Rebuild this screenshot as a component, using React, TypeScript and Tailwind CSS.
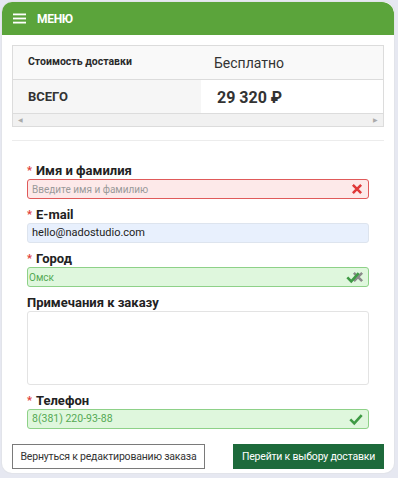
import React from "react";

function Label({ text, required = true }: { text: string; required?: boolean }) {
  return (
    <div className="flex h-[14px] items-center text-[13px] font-bold leading-[14px] text-[#222]">
      {required && <span className="mr-[4px] text-[11px] text-[#e03a3a]">*</span>}
      {text}
    </div>
  );
}

function Check({ className = "" }: { className?: string }) {
  return (
    <svg viewBox="0 0 16 16" className={className} width="14" height="14">
      <path d="M1.5 8.5 L6 13 L14.5 3.5" fill="none" stroke="currentColor" strokeWidth="3" />
    </svg>
  );
}

function Cross({ className = "" }: { className?: string }) {
  return (
    <svg viewBox="0 0 16 16" className={className} width="12" height="12">
      <path d="M2.5 2.5 L13.5 13.5 M13.5 2.5 L2.5 13.5" fill="none" stroke="currentColor" strokeWidth="3.4" />
    </svg>
  );
}

export default function App() {
  return (
    <div className="h-[478px] w-[398px] bg-[#e6e8f1] pl-[2px] pt-[2px] font-['Roboto',sans-serif]">
      <div className="h-[471px] w-[392px] overflow-hidden rounded-[10px] bg-white shadow-[0_0_0_1px_#e2e4ea]">
        <div className="flex h-[33px] items-center rounded-tr-[12px] bg-[#5ba43b] pl-[11px]">
          <svg width="13" height="11" viewBox="0 0 13 11">
            <rect x="0" y="0.5" width="13" height="1.8" fill="#fff" />
            <rect x="0" y="4.6" width="13" height="1.8" fill="#fff" />
            <rect x="0" y="8.7" width="13" height="1.8" fill="#fff" />
          </svg>
          <span className="ml-[11px] text-[12px] font-bold tracking-[-0.3px] text-white">МЕНЮ</span>
        </div>

        <div className="px-[10px] pt-[10px]">
          <div className="border border-[#dcdcdc] border-t-0 border-b-0">
            <div className="h-[1px] bg-[#dcdcdc]" />
            <div className="flex h-[33px] bg-[#f9f9f9]">
              <div className="w-[188px] pl-[15px] pt-[8px] text-[10.5px] font-bold text-[#2a2a2a]">
                Стоимость доставки
              </div>
              <div className="pl-[13px] pt-[7px] text-[14px] text-[#333]">Бесплатно</div>
            </div>
            <div className="h-[1px] bg-[#dcdcdc]" />
            <div className="flex h-[33px]">
              <div className="w-[188px] bg-[#f6f6f6] pl-[15px] pt-[7px] text-[13px] font-bold text-[#333]">
                ВСЕГО
              </div>
              <div className="pl-[16px] pt-[6px] text-[16px] font-bold text-[#333]">29 320 ₽</div>
            </div>
            <div className="flex h-[14px] items-center justify-between border-y border-[#dcdcdc] bg-[#f1f1f1] px-[5px]">
              <span className="text-[6px] leading-none text-[#aaa]">◀</span>
              <span className="text-[6px] leading-none text-[#aaa]">▶</span>
            </div>
          </div>
          <div className="mt-[13px] h-[1px] bg-[#ececec]" />

          <div className="px-[15px] pt-[23px]">
            <Label text="Имя и фамилия" />
            <div className="mt-[1px] flex h-[20px] items-center justify-between rounded-[3px] border border-[#e05a5a] bg-[#fde9e9] pl-[4px] pr-[5px]">
              <span className="text-[10px] text-[#9a9a9a]">Введите имя и фамилию</span>
              <Cross className="text-[#e03a3a]" />
            </div>

            <div className="mt-[9px]">
              <Label text="E-mail" />
            </div>
            <div className="mt-[1px] flex h-[20px] items-center rounded-[3px] border border-[#dde4ee] bg-[#e8f0fd] pl-[4px]">
              <span className="text-[11px] text-[#222]">hello@nadostudio.com</span>
            </div>

            <div className="mt-[9px]">
              <Label text="Город" />
            </div>
            <div className="mt-[1px] flex h-[20px] items-center justify-between rounded-[3px] border border-[#8ed188] bg-[#dff7dd] pl-[1px] pr-[4px]">
              <span className="text-[10px] text-[#55a954]">Омск</span>
              <span className="relative flex h-[14px] w-[18px] items-center justify-end">
                <Cross className="absolute right-0 text-[#8b8b8b]" />
                <Check className="absolute left-0 text-[#3f9a45]" />
              </span>
            </div>

            <div className="mt-[9px]">
              <Label text="Примечания к заказу" required={false} />
            </div>
            <div className="mt-[1px] h-[74px] rounded-[3px] border border-[#e3e3e3] bg-white" />

            <div className="mt-[9px]">
              <Label text="Телефон" />
            </div>
            <div className="mt-[1px] flex h-[20px] items-center justify-between rounded-[3px] border border-[#8ed188] bg-[#dff7dd] pl-[4px] pr-[5px]">
              <span className="text-[10.5px] text-[#55a954]">8(381) 220-93-88</span>
              <Check className="text-[#3f9a45]" />
            </div>
          </div>

          <div className="mt-[15px] flex justify-between">
            <div className="flex h-[25px] w-[193px] items-center justify-center whitespace-nowrap border border-[#7a7a7a] text-[10.5px] tracking-[-0.2px] text-[#333]">
              Вернуться к редактированию заказа
            </div>
            <div className="flex h-[25px] w-[151px] items-center justify-center whitespace-nowrap bg-[#1d6a3b] text-[10.5px] tracking-[-0.2px] text-white">
              Перейти к выбору доставки
            </div>
          </div>
        </div>
      </div>
    </div>
  );
}
